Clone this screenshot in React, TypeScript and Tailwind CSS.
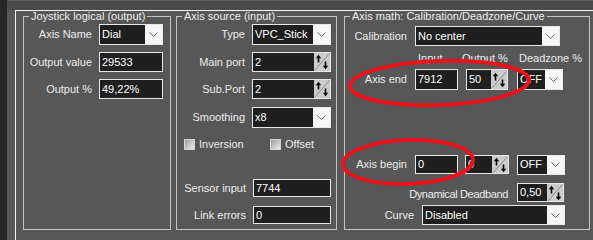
import React from "react";

const Chevron = () => (
  <svg width="9" height="5" viewBox="0 0 9 5">
    <polyline points="0.5,0.5 4.5,4.5 8.5,0.5" fill="none" stroke="#6a6a6a" strokeWidth="1" />
  </svg>
);

const SpinBtn = () => (
  <div className="w-[16px] h-full bg-[#cbcbcb] flex items-center justify-center overflow-hidden">
    <svg width="16" height="18" viewBox="0 0 16 18">
      <line x1="0.5" y1="17.5" x2="15.5" y2="0.5" stroke="#8c8c8c" strokeWidth="1" />
      <line x1="4.5" y1="4" x2="4.5" y2="9.5" stroke="#000" strokeWidth="1.6" />
      <polygon points="1.8,5.2 4.5,1.8 7.2,5.2" fill="#000" />
      <line x1="11.5" y1="8.5" x2="11.5" y2="14" stroke="#000" strokeWidth="1.6" />
      <polygon points="8.8,12.8 11.5,16.2 14.2,12.8" fill="#000" />
    </svg>
  </div>
);

type CtlProps = { value: string; className: string };

const Combo = ({ value, className }: CtlProps) => (
  <div className={"flex border border-[#e8e8e8] bg-[#f6f6f6] " + className}>
    <div className="flex-1 bg-[#1f1f1f] text-white pl-[2px] flex items-center overflow-hidden whitespace-nowrap">{value}</div>
    <div className="w-[17px] flex items-center justify-center">
      <Chevron />
    </div>
  </div>
);

const Spin = ({ value, className }: CtlProps) => (
  <div className={"flex border border-[#e8e8e8] " + className}>
    <div className="flex-1 bg-[#1f1f1f] text-white pl-[2px] flex items-center overflow-hidden whitespace-nowrap">{value}</div>
    <SpinBtn />
  </div>
);

const Field = ({ value, className }: CtlProps) => (
  <div className={"flex border border-[#e8e8e8] bg-[#1f1f1f] text-white pl-[2px] items-center whitespace-nowrap " + className}>
    {value}
  </div>
);

const Check = ({ label }: { label: string }) => (
  <div className="flex items-center gap-[4px]">
    <div className="w-[11px] h-[11px] border border-[#d6d6d6] bg-linear-to-br from-[#9c9c9c] to-[#eeeeee]" />
    <span>{label}</span>
  </div>
);

export default function App() {
  return (
    <div className="relative w-[593px] h-[240px] overflow-hidden bg-[#575757] flex font-['Liberation_Sans',Arial,sans-serif] text-[11px] leading-[13px] text-[#ececec]">
      <div className="w-[7px] h-full bg-[#262626]" />
      <div className="flex-1 flex flex-col">
        <div className="h-[10px] bg-[#4b4b4b] border-t border-[#5c5c5c]" />
        <div className="flex-1 ml-[8px] border-l border-t border-[#f4f4f4] flex items-start pl-[7px]">
          {/* Joystick logical */}
          <fieldset className="w-[148px] h-[219px] border border-[#c4c4c4] pt-[2px] shrink-0">
            <legend className="ml-[5px] px-[2px] leading-[11px]">Joystick logical (output)</legend>
            <div className="flex items-center h-[21px]">
              <span className="w-[68px] text-right">Axis Name</span>
              <Combo value="Dial" className="ml-[7px] w-[64px] h-[21px]" />
            </div>
            <div className="flex items-center h-[20px] mt-[7px]">
              <span className="w-[68px] text-right">Output value</span>
              <Field value="29533" className="ml-[7px] w-[64px] h-[20px]" />
            </div>
            <div className="flex items-center h-[20px] mt-[7px]">
              <span className="w-[68px] text-right">Output %</span>
              <Field value="49,22%" className="ml-[7px] w-[64px] h-[20px]" />
            </div>
          </fieldset>

          {/* Axis source */}
          <fieldset className="ml-[5px] w-[161px] h-[219px] border border-[#c4c4c4] pt-[2px] shrink-0">
            <legend className="ml-[5px] px-[2px] leading-[11px]">Axis source (input)</legend>
            <div className="flex items-center h-[21px]">
              <span className="w-[68px] text-right">Type</span>
              <Combo value="VPC_Stick" className="ml-[7px] w-[79px] h-[21px]" />
            </div>
            <div className="flex items-center h-[20px] mt-[7px]">
              <span className="w-[68px] text-right">Main port</span>
              <Spin value="2" className="ml-[7px] w-[79px] h-[20px]" />
            </div>
            <div className="flex items-center h-[20px] mt-[7px]">
              <span className="w-[68px] text-right">Sub.Port</span>
              <Spin value="2" className="ml-[7px] w-[79px] h-[20px]" />
            </div>
            <div className="flex items-center h-[21px] mt-[8px]">
              <span className="w-[68px] text-right">Smoothing</span>
              <Combo value="x8" className="ml-[7px] w-[79px] h-[21px]" />
            </div>
            <div className="flex items-center h-[11px] mt-[11px]">
              <div className="ml-[7px] w-[86px]">
                <Check label="Inversion" />
              </div>
              <Check label="Offset" />
            </div>
            <div className="flex items-center h-[18px] mt-[29px]">
              <span className="w-[69px] text-right">Sensor input</span>
              <Field value="7744" className="ml-[7px] w-[78px] h-[18px]" />
            </div>
            <div className="flex items-center h-[18px] mt-[9px]">
              <span className="w-[69px] text-right">Link errors</span>
              <Field value="0" className="ml-[7px] w-[78px] h-[18px]" />
            </div>
          </fieldset>

          {/* Axis math */}
          <fieldset className="ml-[7px] w-[246px] h-[219px] border border-[#c4c4c4] pt-[4px] shrink-0">
            <legend className="ml-[5px] px-[2px] leading-[11px]">Axis math: Calibration/Deadzone/Curve</legend>
            <div className="flex items-center h-[20px]">
              <span className="w-[62px] text-right">Calibration</span>
              <Combo value="No center" className="ml-[8px] w-[145px] h-[20px]" />
            </div>
            <div className="flex items-center h-[13px] mt-[6px] whitespace-nowrap">
              <span className="ml-[73px] w-[44px]">Input</span>
              <span className="w-[57px]">Output %</span>
              <span>Deadzone %</span>
            </div>
            <div className="flex items-center h-[21px] mt-[4px]">
              <span className="w-[62px] text-right">Axis end</span>
              <Field value="7912" className="ml-[8px] w-[43px] h-[21px]" />
              <Spin value="50" className="ml-[8px] w-[42px] h-[21px]" />
              <Combo value="OFF" className="ml-[9px] w-[46px] h-[21px]" />
            </div>
            <div className="flex items-center h-[19px] mt-[65px]">
              <span className="w-[62px] text-right">Axis begin</span>
              <Field value="0" className="ml-[8px] w-[43px] h-[19px]" />
              <Spin value="0" className="ml-[7px] w-[44px] h-[19px]" />
              <Combo value="OFF" className="ml-[8px] w-[48px] h-[20px]" />
            </div>
            <div className="flex items-center h-[19px] mt-[9px]">
              <span className="w-[163px] text-right mt-[4px] whitespace-nowrap tracking-[-0.35px]">Dynamical Deadband</span>
              <Spin value="0,50" className="ml-[9px] w-[47px] h-[19px]" />
            </div>
            <div className="flex items-center h-[20px] mt-[3px]">
              <span className="w-[69px] text-right">Curve</span>
              <Combo value="Disabled" className="ml-[8px] w-[143px] h-[20px]" />
            </div>
          </fieldset>
        </div>
      </div>

      <svg className="absolute left-0 top-0 pointer-events-none" width="593" height="240" viewBox="0 0 593 240">
        <ellipse cx="439.5" cy="83" rx="89.5" ry="22" fill="none" stroke="#e8141d" strokeWidth="4" transform="rotate(-2 439.5 83)" />
        <ellipse cx="408" cy="162" rx="65" ry="22" fill="none" stroke="#e8141d" strokeWidth="4" transform="rotate(-2 408 162)" />
      </svg>
    </div>
  );
}
